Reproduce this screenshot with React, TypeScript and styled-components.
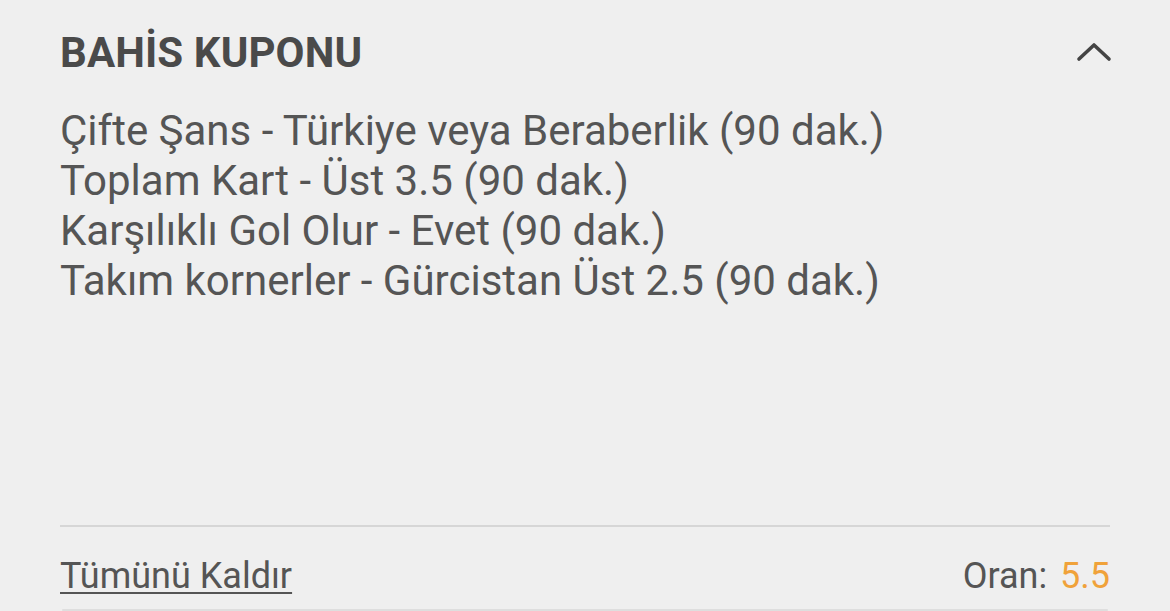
import React from "react"
import styled, { createGlobalStyle } from "styled-components"

const GlobalStyle = createGlobalStyle`
  html, body {
    margin: 0;
    padding: 0;
    background: #efefef;
  }
  body {
    font-family: Roboto, "Noto Sans", sans-serif;
  }
`

const selections = [
  "Çifte Şans - Türkiye veya Beraberlik (90 dak.)",
  "Toplam Kart - Üst 3.5 (90 dak.)",
  "Karşılıklı Gol Olur - Evet (90 dak.)",
  "Takım kornerler - Gürcistan Üst 2.5 (90 dak.)",
]

export default function App() {
  return (
    <>
      <GlobalStyle />
      <Coupon>
        <Header>
          <Title>BAHİS KUPONU</Title>
          <Toggle aria-label="collapse">
            <svg width="36" height="20" viewBox="0 0 36 20">
              <path d="M3 17 L18 3 L33 17" fill="none" stroke="#444" strokeWidth="3.6" strokeLinecap="round" strokeLinejoin="round" />
            </svg>
          </Toggle>
        </Header>
        <List>
          {selections.map((s) => (
            <Item key={s}>{s}</Item>
          ))}
        </List>
        <Footer>
          <RemoveAll>Tümünü Kaldır</RemoveAll>
          <Odds>
            Oran: <OddsValue>5.5</OddsValue>
          </Odds>
        </Footer>
        <NextCard />
      </Coupon>
    </>
  )
}

const Coupon = styled.div`
  width: 1170px;
  height: 611px;
  box-sizing: border-box;
  padding: 28px 60px 0 60px;
  display: flex;
  flex-direction: column;
  overflow: hidden;
  color: #555;
`

const Header = styled.div`
  display: flex;
  align-items: center;
  justify-content: space-between;
  height: 48px;
`

const Title = styled.h1`
  margin: 0;
  font-size: 42px;
  font-weight: 700;
  color: #4a4a4a;
  letter-spacing: 0.1px;
`

const Toggle = styled.button`
  border: 0;
  background: none;
  padding: 0;
  margin-right: -2px;
  display: flex;
  cursor: pointer;
`

const List = styled.ul`
  list-style: none;
  margin: 0;
  padding: 0;
  margin-top: 30px;
  flex: 1;
`

const Item = styled.li`
  font-size: 42px;
  line-height: 50px;
  color: #555;
`

const Footer = styled.div`
  border-top: 2px solid #d6d6d6;
  display: flex;
  justify-content: space-between;
  align-items: baseline;
  padding-top: 28px;
  height: 54px;
`

const RemoveAll = styled.a`
  font-size: 36px;
  color: #555;
  text-decoration: underline;
  text-decoration-thickness: 2px;
  text-underline-offset: 4px;
  cursor: pointer;
`

const Odds = styled.div`
  font-size: 36px;
  color: #555;
`

const OddsValue = styled.span`
  color: #f0a23a;
  margin-left: 4px;
`

const NextCard = styled.div`
  height: 2px;
  background: #dedede;
  margin: 0 2px;
  border-radius: 2px;
`
